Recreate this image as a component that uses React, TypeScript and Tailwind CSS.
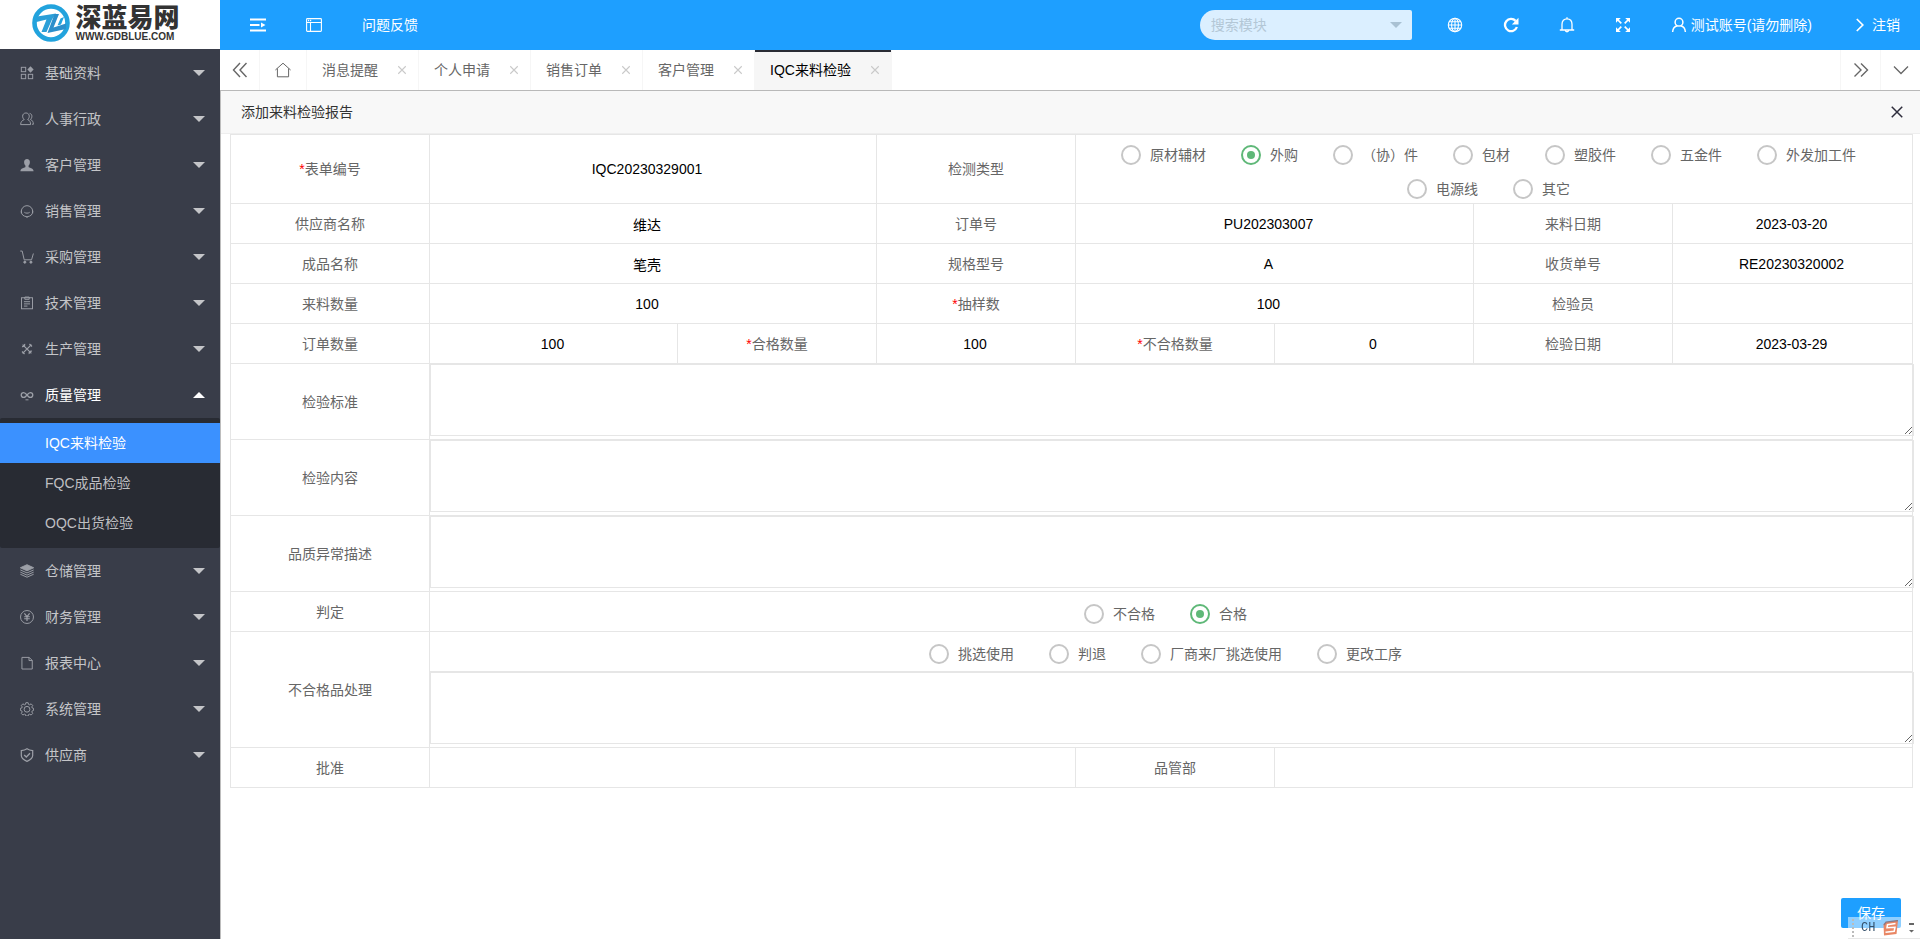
import type { ReactNode } from "react";

/* ---------- Icons ---------- */

type IconProps = { className?: string; children?: ReactNode };

function Svg({ className = "size-4", children }: IconProps) {
  return (
    <svg
      viewBox="0 0 16 16"
      className={className}
      fill="none"
      stroke="currentColor"
      strokeWidth="1.1"
      aria-hidden="true"
    >
      {children}
    </svg>
  );
}

const side = "size-[14px] shrink-0";

const IconComponents = () => (
  <Svg className={side}>
    <rect x="1.5" y="1.5" width="5" height="5" />
    <rect x="1.5" y="9.5" width="5" height="5" />
    <rect x="9.5" y="9.5" width="5" height="5" />
    <path d="M12 .4 15.6 4 12 7.6 8.4 4Z" fill="currentColor" stroke="none" />
  </Svg>
);
const IconGroup = () => (
  <Svg className={side}>
    <path d="M4.8 8.7C3.4 7.4 3 6 3 4.8 3 2.6 4.6 1.1 6.8 1.1s3.8 1.500 3.800 3.700c0 1.200-.4 2.600-1.800 3.900 2.200.8 3.300 2.600 3.300 5.700H.7c0-3.100 1.900-4.900 4.100-5.700Z" />
    <path d="M11 1.600c1.700.3 2.600 1.600 2.600 3.200 0 1.500-.5 2.700-1.700 3.700 2.200.9 3.400 2.800 3.400 5.500h-1.500" />
  </Svg>
);
const IconPerson = () => (
  <Svg className={side}>
    <path
      d="M8 1c2.100 0 3.300 1.500 3.300 3.500 0 1.800-.7 3.400-1.500 4.200v1.600c0 .9 5.700 1 5.700 4.700H.5c0-3.700 5.700-3.800 5.700-4.700V8.700c-.8-.8-1.500-2.400-1.500-4.200C4.700 2.500 5.900 1 8 1Z"
      fill="currentColor"
      stroke="none"
    />
  </Svg>
);
const IconService = () => (
  <Svg className={side}>
    <path d="M3.200 12.800A6.500 6.500 0 1 1 12.800 12.800M1.500 7.500v3.200M14.500 7.500v3.200M5 9.500c1.500 1.300 4.500 1.300 6 0M3.200 12.800c1.300 1 2.600 1.400 4 1.600M12.800 12.800c-1.300 1-2.600 1.400-4 1.600" />
    <circle cx="8" cy="14.700" r=".6" fill="currentColor" />
  </Svg>
);
const IconCart = () => (
  <Svg className={side}>
    <path d="M.3 1.200h2.200l2.300 10h8.400L15.300 4" />
    <circle cx="5.500" cy="13.900" r="1.200" fill="currentColor" />
    <circle cx="12.500" cy="13.900" r="1.200" fill="currentColor" />
  </Svg>
);
const IconForm = () => (
  <Svg className={side}>
    <rect x="1.700" y="2" width="12.600" height="12.600" />
    <path d="M5.500 1.200h5v2.600h-5zM4.500 6.500h7M4.500 9h7M4.500 11.500h4" />
  </Svg>
);
const IconTools = () => (
  <Svg className={side}>
    <path d="m3 3 10 10M13 3 3 13" strokeWidth="1.500" />
    <path d="M2.300 5.200a2.400 2.400 0 0 0 3-3M13.700 5.200 10.800 2.300M2.300 10.800l2.900 2.900M13.700 10.600a2.400 2.400 0 0 0-3.100 3.100" strokeWidth="1.400" />
  </Svg>
);
const IconInfinity = () => (
  <Svg className={side}>
    <path
      d="M8 8C6.600 6.200 5.700 5.200 4.200 5.200a2.800 2.800 0 0 0 0 5.600C5.700 10.800 6.600 9.800 8 8s2.300-2.800 3.800-2.800a2.800 2.800 0 0 1 0 5.600C10.300 10.800 9.400 9.800 8 8Z"
      strokeWidth="1.500"
    />
    <path d="M6.300 13.500h3.400" />
  </Svg>
);
const IconLayers = () => (
  <Svg className={side}>
    <path d="M8 .8 15.600 4.300 8 7.800.4 4.300Z" fill="currentColor" />
    <path d="M.4 6.800 8 10.200l7.600-3.400M.4 9.300 8 12.700l7.600-3.400M.4 11.700 8 15.100l7.600-3.400" />
  </Svg>
);
const IconYen = () => (
  <Svg className={side}>
    <circle cx="8" cy="8" r="7.400" />
    <path d="m5 3.800 3 3.700 3-3.700M8 7.500v5M4.800 7.700h6.400M4.800 10h6.400" strokeWidth="1.400" />
  </Svg>
);
const IconFile = () => (
  <Svg className={side}>
    <path d="M2.200 1.600h8.300l3.500 3.500v9.800H2.200zM10.300 1.600v3.600H14" />
  </Svg>
);
const IconGear = () => (
  <Svg className={side}>
    <path d="M6.700.8h2.600l.4 1.900 1.300.5 1.700-1.100 1.800 1.900-1 1.600.5 1.300 1.500.4v2.300l-1.500.5-.5 1.300 1 1.700-1.800 1.800-1.700-1-1.300.5-.4 1.700H6.700l-.4-1.700-1.300-.5-1.700 1-1.800-1.800 1-1.700L2 10.100l-1.600-.5V7.300L2 6.900l.5-1.300-1-1.600 1.800-1.900L5 3.200l1.300-.5Z" />
    <circle cx="8" cy="8.300" r="3.300" />
  </Svg>
);
const IconShield = () => (
  <Svg className={side}>
    <path d="M8 .9c2 1.400 4.300 1.900 6.500 2v5.700c0 3-2.800 5-6.500 6.700C4.300 13.600 1.500 11.600 1.500 8.600V2.900C3.700 2.800 6 2.300 8 .9Z" strokeWidth="1.400" />
    <path d="m4.800 8 2.400 2.300L11.400 6" strokeWidth="1.500" />
  </Svg>
);

const IconShrink = () => (
  <Svg>
    <path d="M0 2.500h16M0 8h9.500M0 13.500h16" strokeWidth="1.800" />
    <path d="M11 5.500 15.500 8 11 10.500Z" fill="currentColor" stroke="none" />
  </Svg>
);
const IconWindow = () => (
  <Svg>
    <rect x=".6" y="1.600" width="14.800" height="12.800" rx=".8" />
    <path d="M.6 5.500h14.800M4.500 5.500v9" />
    <path d="M2 3.500h4" strokeWidth="1.300" strokeDasharray="1.200 .8" />
  </Svg>
);
const IconGlobe = () => (
  <Svg>
    <circle cx="8" cy="8" r="6.700" />
    <ellipse cx="8" cy="8" rx="3.400" ry="6.700" />
    <path d="M8 1.500v13M1.500 8h13M2.400 4.700h11.200M2.400 11.300h11.200" />
  </Svg>
);
const IconRefresh = () => (
  <Svg>
    <path d="M12.600 3.900A6.100 6.100 0 1 0 13.900 10" strokeWidth="2.300" />
    <path d="M15.500.8v6.700H8.800Z" fill="currentColor" stroke="none" />
  </Svg>
);
const IconBell = () => (
  <Svg>
    <path d="M.8 13h14.400M3 13V7.200C3 4 5 1.800 8 1.800S13 4 13 7.200V13M8 .3v1.500M6.300 13.300c.2 1.900 3.200 1.900 3.400 0" strokeWidth="1.300" />
  </Svg>
);
const IconFull = () => (
  <Svg>
    <path d="M2.500 2.500 6.300 6.300M13.500 2.500 9.700 6.300M2.500 13.500 6.300 9.700M13.500 13.500 9.700 9.700" strokeWidth="1.700" />
    <path d="M1 1h4.800L1 5.800ZM15 1v4.800L10.200 1ZM1 15v-4.800L5.800 15ZM15 15h-4.800L15 10.200Z" fill="currentColor" stroke="none" />
  </Svg>
);
const IconUser = () => (
  <Svg>
    <circle cx="8" cy="5.200" r="3.900" strokeWidth="1.500" />
    <path d="M1.600 15c.2-3.600 2-5.700 4.900-6.300M14.400 15c-.2-3.600-2-5.700-4.900-6.300" strokeWidth="1.500" />
  </Svg>
);
const IconRight = () => (
  <Svg>
    <path d="m4.800 2 6 6-6 6" strokeWidth="1.700" />
  </Svg>
);
const IconDoubleLeft = () => (
  <Svg>
    <path d="M8 1 1.500 8 8 15M14.500 1 8 8l6.500 7" strokeWidth="1.400" />
  </Svg>
);
const IconDoubleRight = () => (
  <Svg>
    <path d="M1.500 1.500 8 8l-6.500 6.500M8 1.500 14.500 8 8 14.500" strokeWidth="1.400" />
  </Svg>
);
const IconDown = () => (
  <Svg>
    <path d="M1 4.500 8 11.500l7-7" strokeWidth="1.300" />
  </Svg>
);
const IconHome = () => (
  <Svg>
    <path d="M.4 8 8 1.200 15.600 8M2.400 6.500v8.300h11.200V6.500" strokeWidth="1" />
  </Svg>
);
const IconCross = ({ className }: IconProps) => (
  <Svg className={className}>
    <path d="m2 2 12 12M14 2 2 14" strokeWidth="1.700" />
  </Svg>
);

function Caret({ up = false }: { up?: boolean }) {
  return (
    <svg viewBox="0 0 12 6" className="h-1.5 w-3 shrink-0" fill="currentColor" aria-hidden="true">
      <path d={up ? "M0 6h12L6 0Z" : "M0 0h12L6 6Z"} />
    </svg>
  );
}

/* ---------- Sidebar ---------- */

const menuTop = [
  { name: "基础资料", Icon: IconComponents },
  { name: "人事行政", Icon: IconGroup },
  { name: "客户管理", Icon: IconPerson },
  { name: "销售管理", Icon: IconService },
  { name: "采购管理", Icon: IconCart },
  { name: "技术管理", Icon: IconForm },
  { name: "生产管理", Icon: IconTools },
];
const menuBottom = [
  { name: "仓储管理", Icon: IconLayers },
  { name: "财务管理", Icon: IconYen },
  { name: "报表中心", Icon: IconFile },
  { name: "系统管理", Icon: IconGear },
  { name: "供应商", Icon: IconShield },
];

function MenuItem({ name, Icon, open = false }: { name: string; Icon: () => ReactNode; open?: boolean }) {
  return (
    <button
      type="button"
      aria-expanded={open}
      className={`flex h-[46px] w-full items-center pr-[15px] pl-5 text-left ${open ? "text-white" : "text-[#c4c5c8]"}`}
    >
      <span className="text-[#9c9fa7]">
        <Icon />
      </span>
      <span className="flex-1 pl-[11px]">{name}</span>
      <Caret up={open} />
    </button>
  );
}

function Logo() {
  return (
    <div className="flex h-[49px] items-start justify-center gap-[5px] bg-white pr-2 pt-1">
      <svg viewBox="0 0 38 38" className="size-[38px]" aria-hidden="true">
        <circle cx="19" cy="19" r="16.500" fill="none" stroke="#22a3dd" strokeWidth="4.600" />
        <path d="M5 12.500 24 9.500 20 15.500 14.500 28H9.500L14.500 15.500 4.500 18Z" fill="#2b9fd8" />
        <path d="M22.500 10H27L21.500 23.500 34 19.500V25L15.500 29Z" fill="#2b8fcb" />
        <path d="M28.500 14.500 32 13 29 20.500 25.500 21.500Z" fill="#22a3dd" />
      </svg>
      <div className="flex flex-col text-[#333]">
        <span className="text-[26px] leading-[28px] font-black">深蓝易网</span>
        <span className="text-[10px] leading-[10px] font-bold">WWW.GDBLUE.COM</span>
      </div>
    </div>
  );
}

function Sidebar() {
  return (
    <aside className="w-[220px] shrink-0 bg-[#393d49]">
      <Logo />
      <nav className="pt-px">
        {menuTop.map((m) => (
          <MenuItem key={m.name} {...m} />
        ))}
        <MenuItem name="质量管理" Icon={IconInfinity} open />
        <div className="rounded-xs bg-[#282b33] py-[5px]">
          <a href="#iqc" className="block h-10 bg-[#3b91ff] pl-[45px] leading-10 text-white">
            IQC来料检验
          </a>
          <a href="#fqc" className="block h-10 pl-[45px] leading-10 text-[#bfbfc2]">
            FQC成品检验
          </a>
          <a href="#oqc" className="block h-10 pl-[45px] leading-10 text-[#bfbfc2]">
            OQC出货检验
          </a>
        </div>
        {menuBottom.map((m) => (
          <MenuItem key={m.name} {...m} />
        ))}
      </nav>
    </aside>
  );
}

/* ---------- Header and tabs ---------- */

function HeaderButton({ label, children }: { label: string; children: ReactNode }) {
  return (
    <button type="button" aria-label={label} className="flex h-full items-center gap-1 px-5">
      {children}
    </button>
  );
}

function Header() {
  return (
    <header className="flex h-[50px] items-center bg-[#1e9fff] pl-2.5 text-white">
      <HeaderButton label="侧边伸缩">
        <IconShrink />
      </HeaderButton>
      <HeaderButton label="前台">
        <IconWindow />
      </HeaderButton>
      <a href="#feedback" className="px-5">
        问题反馈
      </a>
      <div className="mr-[15px] ml-auto flex h-[30px] w-[212px] items-center rounded-l-[15px] rounded-r-xs bg-[#dbefff] pr-2.5 pl-[11px] text-[#a9c1d3]">
        <input
          type="text"
          aria-label="搜索模块"
          placeholder="搜索模块"
          className="min-w-0 flex-1 bg-transparent outline-none placeholder:text-[#b3c7d6]"
        />
        <Caret />
      </div>
      <HeaderButton label="语言">
        <IconGlobe />
      </HeaderButton>
      <HeaderButton label="刷新">
        <IconRefresh />
      </HeaderButton>
      <HeaderButton label="消息">
        <IconBell />
      </HeaderButton>
      <HeaderButton label="全屏">
        <IconFull />
      </HeaderButton>
      <HeaderButton label="测试账号(请勿删除)">
        <IconUser />
        <span>测试账号(请勿删除)</span>
      </HeaderButton>
      <HeaderButton label="注销">
        <IconRight />
        <span>注销</span>
      </HeaderButton>
    </header>
  );
}

const tabs = ["消息提醒", "个人申请", "销售订单", "客户管理", "IQC来料检验"];

function TabBar() {
  return (
    <div className="flex h-[41px] border-b border-[#b9b9b9] bg-white pl-px text-[#666]">
      <button type="button" aria-label="向左" className="flex w-[39px] items-center justify-center border-r border-[#f6f6f6]">
        <IconDoubleLeft />
      </button>
      <button type="button" aria-label="首页" className="flex w-[47px] items-center justify-center border-r border-[#f6f6f6]">
        <IconHome />
      </button>
      {tabs.map((t) => {
        const active = t === "IQC来料检验";
        return (
          <div
            key={t}
            className={`flex items-center gap-4 border-r border-[#f6f6f6] pr-2 pl-[15px] ${
              active ? "bg-[#f6f6f6] text-black shadow-[inset_0_2px_0_#292b34]" : ""
            }`}
          >
            <a href="#tab">{t}</a>
            <button type="button" aria-label={`关闭${t}`} className="flex size-4 items-center justify-center text-[#c9c9c9]">
              <IconCross className="size-2.5" />
            </button>
          </div>
        );
      })}
      <button type="button" aria-label="向右" className="ml-auto flex w-10 items-center justify-center border-l border-[#f6f6f6]">
        <IconDoubleRight />
      </button>
      <button type="button" aria-label="更多" className="flex w-10 items-center justify-center border-l border-[#f6f6f6]">
        <IconDown />
      </button>
    </div>
  );
}

/* ---------- Form ---------- */

const cell = "border border-[#e6e6e6] p-0";

function LabelCell({ text, id, required = false, rowSpan }: { text: string; id: string; required?: boolean; rowSpan?: number }) {
  return (
    <th scope="row" rowSpan={rowSpan} className={`${cell} font-normal text-[#666]`}>
      <label htmlFor={id}>
        {required && <span className="text-[#f00]">*</span>}
        {text}
      </label>
    </th>
  );
}

function ValueCell({ id, value = "", span = 1 }: { id: string; value?: string; span?: number }) {
  return (
    <td colSpan={span} className={cell}>
      <input
        id={id}
        type="text"
        defaultValue={value}
        className={`block h-[38px] w-full text-center text-black outline-none ${span > 1 ? "pr-3" : "pr-0.5"}`}
      />
    </td>
  );
}

function AreaCell({ id }: { id: string }) {
  return (
    <td colSpan={7} className={cell}>
      <textarea
        id={id}
        className="mb-[3px] block h-[72px] w-[calc(100%+2px)] resize border border-[#e6e6e6] px-2.5 py-1.5 outline-none"
      />
    </td>
  );
}

function RadioGroup({ name, options, selected }: { name: string; options: string[]; selected?: string }) {
  return (
    <div id={name} role="radiogroup" className="flex flex-wrap justify-center gap-x-[34px] gap-y-1.5 pr-3 text-[#666]">
      {options.map((o) => (
        <label key={o} className="flex h-7 items-center gap-2">
          <input
            type="radio"
            name={name}
            defaultChecked={o === selected}
            className="m-px grid size-5 appearance-none place-items-center rounded-full border-2 border-[#c6c6c6] checked:border-[#5fb878] checked:before:size-2 checked:before:rounded-full checked:before:bg-[#5fb878] checked:before:content-['']"
          />
          <span>{o}</span>
        </label>
      ))}
    </div>
  );
}

const types = ["原材辅材", "外购", "（协）件", "包材", "塑胶件", "五金件", "外发加工件", "电源线", "其它"];

function InspectionForm() {
  return (
    <form className="pr-[7px] pl-[9px]">
      <table className="w-full table-fixed border-collapse">
        <colgroup>
          <col className="w-[11.83%]" />
          <col className="w-[14.75%]" />
          <col className="w-[11.83%]" />
          <col className="w-[11.83%]" />
          <col className="w-[11.83%]" />
          <col className="w-[11.83%]" />
          <col className="w-[11.83%]" />
          <col />
        </colgroup>
        <tbody>
          <tr className="h-[69px]">
            <LabelCell text="表单编号" id="code" required />
            <ValueCell id="code" value="IQC20230329001" span={2} />
            <LabelCell text="检测类型" id="kind" />
            <td colSpan={4} className={cell}>
              <div className="pt-1.5">
                <RadioGroup name="kind" options={types} selected="外购" />
              </div>
            </td>
          </tr>
          <tr className="h-10">
            <LabelCell text="供应商名称" id="supplier" />
            <ValueCell id="supplier" value="维达" span={2} />
            <LabelCell text="订单号" id="order" />
            <ValueCell id="order" value="PU202303007" span={2} />
            <LabelCell text="来料日期" id="arrival" />
            <ValueCell id="arrival" value="2023-03-20" />
          </tr>
          <tr className="h-10">
            <LabelCell text="成品名称" id="product" />
            <ValueCell id="product" value="笔壳" span={2} />
            <LabelCell text="规格型号" id="model" />
            <ValueCell id="model" value="A" span={2} />
            <LabelCell text="收货单号" id="receipt" />
            <ValueCell id="receipt" value="RE20230320002" />
          </tr>
          <tr className="h-10">
            <LabelCell text="来料数量" id="arrival-qty" />
            <ValueCell id="arrival-qty" value="100" span={2} />
            <LabelCell text="抽样数" id="sample" required />
            <ValueCell id="sample" value="100" span={2} />
            <LabelCell text="检验员" id="inspector" />
            <ValueCell id="inspector" />
          </tr>
          <tr className="h-10">
            <LabelCell text="订单数量" id="order-qty" />
            <ValueCell id="order-qty" value="100" />
            <LabelCell text="合格数量" id="pass-qty" required />
            <ValueCell id="pass-qty" value="100" />
            <LabelCell text="不合格数量" id="fail-qty" required />
            <ValueCell id="fail-qty" value="0" />
            <LabelCell text="检验日期" id="inspect-date" />
            <ValueCell id="inspect-date" value="2023-03-29" />
          </tr>
          <tr>
            <LabelCell text="检验标准" id="standard" />
            <AreaCell id="standard" />
          </tr>
          <tr>
            <LabelCell text="检验内容" id="content" />
            <AreaCell id="content" />
          </tr>
          <tr>
            <LabelCell text="品质异常描述" id="defect" />
            <AreaCell id="defect" />
          </tr>
          <tr className="h-10">
            <LabelCell text="判定" id="verdict" />
            <td colSpan={7} className={cell}>
              <div className="pt-1">
                <RadioGroup name="verdict" options={["不合格", "合格"]} selected="合格" />
              </div>
            </td>
          </tr>
          <tr className="h-10">
            <LabelCell text="不合格品处理" id="handling" rowSpan={2} />
            <td colSpan={7} className={cell}>
              <div className="pt-1">
                <RadioGroup name="disposal" options={["挑选使用", "判退", "厂商来厂挑选使用", "更改工序"]} />
              </div>
            </td>
          </tr>
          <tr>
            <AreaCell id="handling" />
          </tr>
          <tr className="h-10">
            <LabelCell text="批准" id="approve" />
            <ValueCell id="approve" span={3} />
            <LabelCell text="品管部" id="qc" />
            <ValueCell id="qc" span={3} />
          </tr>
        </tbody>
      </table>
    </form>
  );
}

/* ---------- Input method bar ---------- */

function ImeBar() {
  return (
    <div className="fixed right-0 bottom-0 flex h-[22px] w-[72px] items-center border-b border-[#e8e8e8] bg-white/50 pl-1">
      <svg viewBox="0 0 2 20" className="h-5 w-0.5 text-[#bbb]" aria-hidden="true">
        <path d="M1 1v18" stroke="currentColor" strokeWidth="2" strokeDasharray="2 2" />
      </svg>
      <span className="pl-[7px] font-['Liberation_Mono',monospace] text-xs text-[#35506b]">CH</span>
      <svg viewBox="0 0 16 16" className="ml-2 size-4" aria-hidden="true">
        <path d="M3 2.200 15 .5 13.500 14 1 15.500 .5 4Z" fill="#e98765" />
        <path d="M12.500 3.500 4.500 4.700 4 7.800l8-.6-.8 4L2.500 12.300" fill="none" stroke="#fff" strokeWidth="1.500" />
        <path d="M1 5 3 2.200 15 .5" fill="none" stroke="#8a7a86" strokeWidth="1.300" />
      </svg>
      <svg viewBox="0 0 5 10" className="ml-2.5 h-2.5 w-[5px]" fill="#666" aria-hidden="true">
        <path d="M0 0h5v2H0zM0 7h5L2.500 9.500Z" />
      </svg>
    </div>
  );
}

export default function App() {
  return (
    <div className="flex min-h-screen bg-white font-['Liberation_Sans','Noto_Sans_CJK_SC',sans-serif] text-sm leading-6">
      <Sidebar />
      <div className="flex min-w-0 flex-1 flex-col">
        <Header />
        <TabBar />
        <main className="flex flex-1 flex-col border-l border-[#bdbdbd]">
          <div className="flex h-[43px] items-center justify-between border-b border-[#eee] bg-[#f8f8f8] pr-4 pl-5 text-[#333]">
            <h1>添加来料检验报告</h1>
            <button type="button" aria-label="关闭" className="text-[#2e2d3c]">
              <IconCross className="size-3.5" />
            </button>
          </div>
          <InspectionForm />
          <div className="mt-auto flex justify-end pr-[19px] pb-[11px]">
            <button type="button" className="h-[30px] w-[60px] rounded-xs bg-[#1e9fff] text-white">
              保存
            </button>
          </div>
        </main>
      </div>
      <ImeBar />
    </div>
  );
}
